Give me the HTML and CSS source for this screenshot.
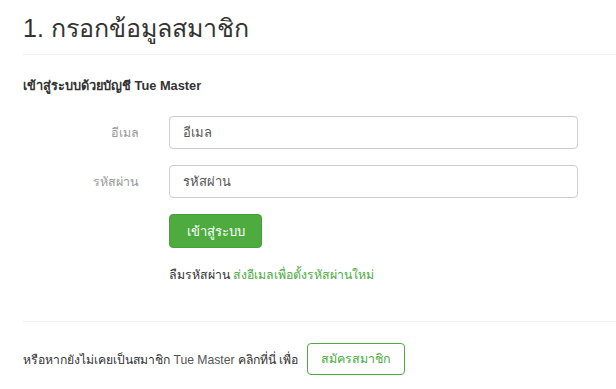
FILE: index.html
```html
<!DOCTYPE html>
<html lang="th">
<head>
<meta charset="utf-8">
<link rel="stylesheet" href="styles.css">
</head>
<body>
<div class="page">
  <h1 class="title">1. กรอกข้อมูลสมาชิก</h1>
  <div class="section">
    <h2 class="subtitle">เข้าสู่ระบบด้วยบัญชี Tue Master</h2>
    <form class="form">
      <div class="row">
        <label class="label">อีเมล</label>
        <input class="input" type="text" placeholder="อีเมล">
      </div>
      <div class="row">
        <label class="label">รหัสผ่าน</label>
        <input class="input" type="password" placeholder="รหัสผ่าน">
      </div>
      <div class="row">
        <span class="label"></span>
        <button type="button" class="btn-primary">เข้าสู่ระบบ</button>
      </div>
      <div class="row forgot-row">
        <span class="label"></span>
        <p class="forgot">ลืมรหัสผ่าน <a class="link" href="#">ส่งอีเมลเพื่อตั้งรหัสผ่านใหม่</a></p>
      </div>
    </form>
  </div>
  <div class="footer">
    <span class="footer-text">หรือหากยังไม่เคยเป็นสมาชิก <span class="light">Tue Master</span> คลิกที่นี่ เพื่อ</span>
    <button type="button" class="btn-outline">สมัครสมาชิก</button>
  </div>
</div>
</body>
</html>
```
FILE: styles.css
```css
* { box-sizing: border-box; }
html, body { margin: 0; padding: 0; background: #fff; }
body {
  font-family: "Helvetica Neue", "Liberation Sans", "Noto Sans", sans-serif;
  color: #333;
  font-size: 12px;
}
.page { padding-left: 23px; }
.title {
  margin: 0;
  padding-top: 12px;
  padding-bottom: 10px;
  font-size: 25px;
  font-weight: 400;
  line-height: 32px;
  color: #333;
  border-bottom: 1px solid #eee;
}
.section {
  padding-top: 22px;
  padding-bottom: 37px;
  border-bottom: 1px solid #eee;
}
.subtitle {
  margin: 0 0 22px;
  font-size: 12.8px;
  font-weight: 700;
  line-height: 17px;
}
.form { display: flex; flex-direction: column; }
.row {
  display: flex;
  align-items: center;
  gap: 30px;
  margin-bottom: 16px;
}
.label {
  width: 116px;
  flex: none;
  text-align: right;
  color: #999;
  font-size: 12.5px;
}
.input {
  width: 409px;
  height: 33px;
  border: 1px solid #ccc;
  border-radius: 4px;
  padding: 0 13px;
  font-family: inherit;
  font-size: 13px;
  color: #555;
}
.input::placeholder { color: #555; opacity: 1; }
.btn-primary {
  width: 93px;
  height: 34px;
  border: 1px solid #459e36;
  border-radius: 4px;
  background: #4dab3f;
  color: #fff;
  font-family: inherit;
  font-size: 13px;
}
.forgot-row { margin-bottom: 0; }
.forgot {
  margin: 2px 0 0;
  font-size: 12.3px;
  line-height: 18px;
  color: #333;
}
.link { color: #4dab3f; text-decoration: none; }
.footer {
  display: flex;
  align-items: center;
  gap: 9px;
  padding-top: 21px;
}
.footer-text { font-size: 12.2px; color: #333; }
.light { color: #555; font-weight: 300; }
.btn-outline {
  width: 98px;
  height: 32px;
  border: 1px solid #4dab3f;
  border-radius: 4px;
  background: #fff;
  color: #4dab3f;
  font-family: inherit;
  font-size: 12.5px;
}
```
